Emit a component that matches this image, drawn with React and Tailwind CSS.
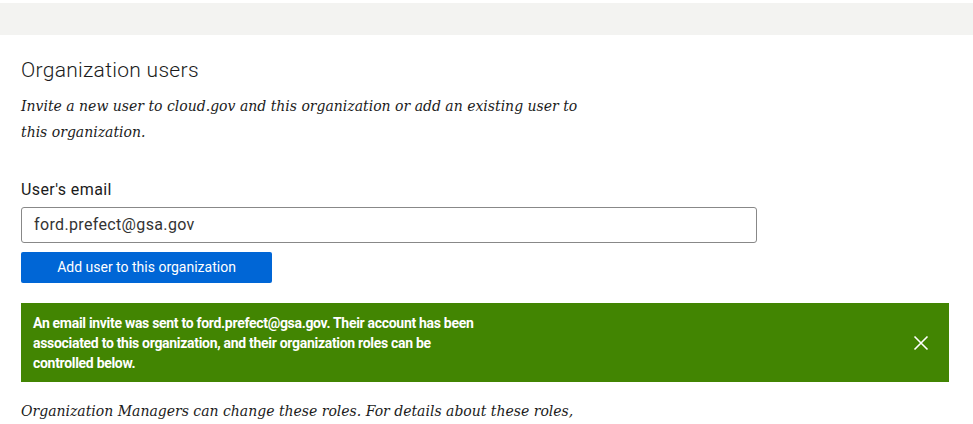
import React from "react";

export default function App() {
  return (
    <div className="w-[973px] h-[424px] overflow-hidden bg-white pt-[3px]" style={{ fontFamily: "Roboto, sans-serif" }}>
      <div className="h-[32px] bg-[#f3f3f1]" />
      <div className="pl-[21px] pr-[24px]">
        <h2 className="mt-[23px] text-[21px] leading-[24px] font-light tracking-[0.3px] text-[#1b1b1b]">Organization users</h2>
        <p className="mt-[11px] w-[580px] text-[14px] leading-[26px] italic text-[#1b1b1b]" style={{ fontFamily: '"DejaVu Serif", serif' }}>
          Invite a new user to cloud.gov and this organization or add an existing user to this organization.
        </p>
        <label className="block mt-[35px] text-[16px] leading-[20px] tracking-[0.4px] text-[#1b1b1b]">User's email</label>
        <div className="mt-[7px] w-[736px] h-[36px] border border-[#888] rounded-[3px] flex items-center pl-[12px] text-[16px] tracking-[0.35px] text-[#333]">
          ford.prefect@gsa.gov
        </div>
        <button className="mt-[9px] w-[251px] h-[31px] bg-[#0066d6] rounded-[2px] text-white text-[14px] flex items-center justify-center">
          Add user to this organization
        </button>
        <div className="mt-[20px] w-[928px] h-[79px] bg-[#428502] flex items-center justify-between pl-[12px] pr-[20px]">
          <p className="w-[450px] text-white font-bold text-[14px] leading-[20px] tracking-[-0.3px]">
            An email invite was sent to ford.prefect@gsa.gov. Their account has been associated to this organization, and their organization roles can be controlled below.
          </p>
          <svg width="16" height="16" viewBox="0 0 16 16">
            <path d="M1.5 1.5 L14.5 14.5 M14.5 1.5 L1.5 14.5" stroke="white" strokeWidth="1.6" fill="none" />
          </svg>
        </div>
        <p className="mt-[16px] text-[14px] leading-[26px] italic text-[#1b1b1b]" style={{ fontFamily: '"DejaVu Serif", serif' }}>
          Organization Managers can change these roles. For details about these roles,
        </p>
      </div>
    </div>
  );
}
